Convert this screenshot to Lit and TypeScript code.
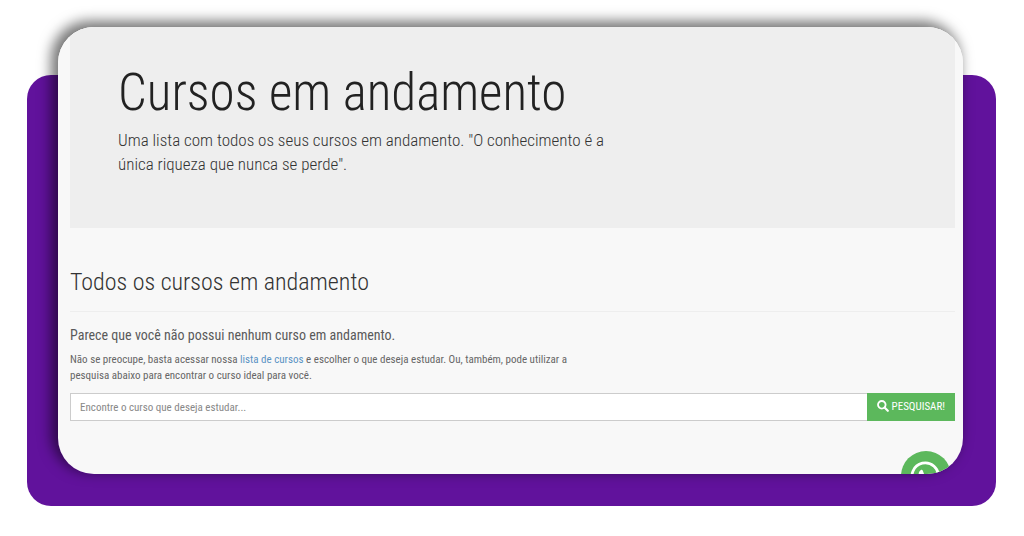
import { LitElement, html, css } from "lit";
import { customElement } from "lit/decorators.js";

@customElement("app-root")
class AppRoot extends LitElement {
  static styles = css`
    :host {
      display: flow-root;
      background: #fff;
      color: #333;
      font-family: "Roboto Condensed", "Roboto", "Liberation Sans", sans-serif;
      font-weight: 300;
    }
    * {
      box-sizing: border-box;
    }
    .backdrop {
      display: flow-root;
      margin: 75px 28px 30px 27px;
      padding: 0 33px 32px 31px;
      border-radius: 24px;
      background: #61129c;
    }
    .card {
      margin-top: -48px;
      border-radius: 36px;
      box-shadow: -5px -4px 13px 2px rgba(0, 0, 0, 0.54);
    }
    .page {
      position: relative;
      overflow: hidden;
      border-radius: 36px;
      background: #f8f8f8;
      padding: 0 8px 53px 12px;
    }
    .hero {
      background: #eee;
      padding: 36px 48px 52px;
    }
    h1,
    h2,
    h3,
    p {
      margin: 0;
      font-weight: 300;
    }
    h1 {
      font-size: 51px;
      line-height: 60px;
      color: #222;
    }
    .lead {
      max-width: 500px;
      margin-top: 5px;
      font-size: 17px;
      line-height: 24px;
    }
    h2 {
      margin-top: 38px;
      padding-bottom: 13px;
      border-bottom: 1px solid #eee;
      font-size: 24px;
      line-height: 32px;
    }
    h3 {
      margin-top: 13px;
      font-size: 14px;
      font-weight: 400;
      line-height: 20px;
      color: #5a5a5a;
    }
    .hint {
      max-width: 510px;
      margin-top: 7px;
      font-size: 11px;
      font-weight: 400;
      line-height: 16px;
      color: #666;
    }
    a {
      color: #5a93c4;
      text-decoration: none;
    }
    .search {
      display: flex;
      height: 28px;
      margin-top: 9px;
    }
    input {
      flex: 1;
      min-width: 0;
      padding: 0 9px;
      border: 1px solid #ccc;
      border-right: 0;
      border-radius: 0;
      background: #fff;
      font: inherit;
      font-size: 11px;
      font-weight: 400;
    }
    input::placeholder {
      color: #888;
      opacity: 1;
    }
    button {
      display: flex;
      align-items: center;
      gap: 3px;
      padding: 0 10px 2px;
      border: 0;
      background: #5cb85c;
      color: #fff;
      font: inherit;
      font-size: 11px;
      font-weight: 400;
      white-space: nowrap;
    }
    .glass {
      width: 12px;
      height: 12px;
    }
    .chat {
      position: absolute;
      right: 12px;
      bottom: -27px;
      width: 50px;
      height: 50px;
    }
    .chat svg {
      display: block;
    }
  `;

  render() {
    return html`
      <div class="backdrop">
        <div class="card">
          <main class="page">
            <header class="hero">
              <h1>Cursos em andamento</h1>
              <p class="lead">
                Uma lista com todos os seus cursos em andamento. "O conhecimento é a única riqueza
                que nunca se perde".
              </p>
            </header>
            <h2>Todos os cursos em andamento</h2>
            <h3>Parece que você não possui nenhum curso em andamento.</h3>
            <p class="hint">
              Não se preocupe, basta acessar nossa <a href="#cursos">lista de cursos</a> e escolher
              o que deseja estudar. Ou, também, pode utilizar a pesquisa abaixo para encontrar o
              curso ideal para você.
            </p>
            <form class="search" @submit=${(e: Event) => e.preventDefault()}>
              <input
                type="text"
                aria-label="Pesquisar curso"
                placeholder="Encontre o curso que deseja estudar..."
              />
              <button type="submit">
                <svg class="glass" viewBox="0 0 12 12" aria-hidden="true">
                  <circle cx="4.8" cy="4.8" r="3.8" fill="none" stroke="#fff" stroke-width="1.8" />
                  <path d="M7.8 7.8 L10.8 10.8" stroke="#fff" stroke-width="2.2" stroke-linecap="round" />
                </svg>
                PESQUISAR!
              </button>
            </form>
            <a class="chat" href="#whatsapp" aria-label="WhatsApp">
              <svg width="50" height="50" viewBox="0 0 50 50" aria-hidden="true">
                <circle cx="25" cy="25" r="25" fill="#5cb85c" />
                <path
                  d="M11.500 39 L13 32 A13.200 13.200 0 1 1 18.600 37 Z"
                  fill="none"
                  stroke="#fff"
                  stroke-width="2.8"
                />
                <path
                  d="M19.6 19.2 c.8-.6 1.8-.4 2.1.4 l1.2 2.8 c.2.6-1.2 1.8-1.2 2.2 .8 2 3 4.2 5.2 5 .6 0 1.4-1.8 2-1.6 l3 1.5 c.7.4.2 2.5-.8 3.2 -1.6 1.1-3.6 1-6-.2 -3.4-1.6-6.2-4.8-7.2-7.9 -.6-2-.1-4.200 1.700-5.400 z"
                  fill="#fff"
                />
              </svg>
            </a>
          </main>
        </div>
      </div>
    `;
  }
}
